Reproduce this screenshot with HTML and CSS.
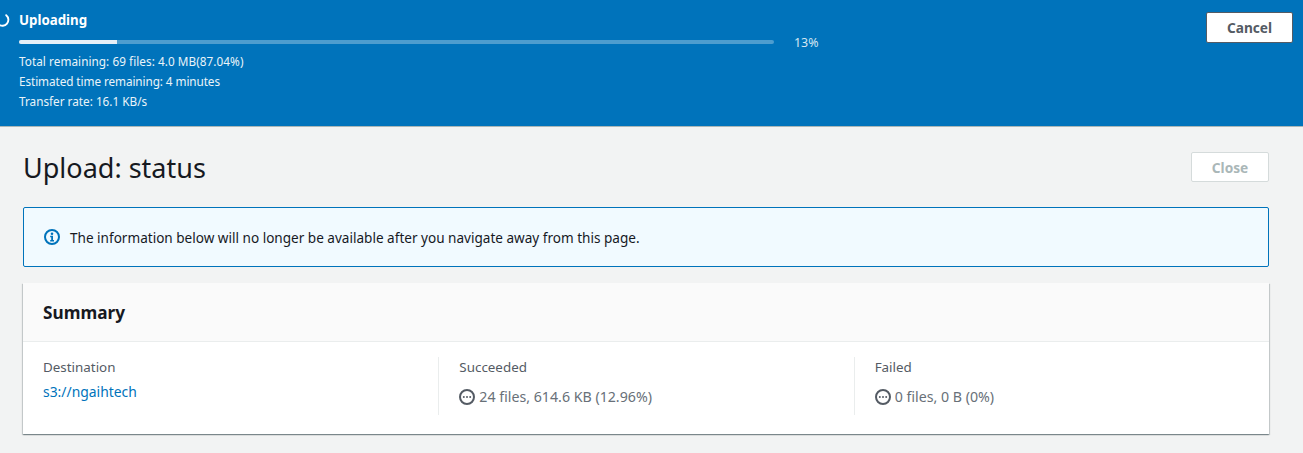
FILE: index.html
```html
<!DOCTYPE html>
<html lang="en">
<head>
<meta charset="utf-8">
<title>Upload: status</title>
<link rel="stylesheet" href="styles.css">
</head>
<body>
<header class="banner">
  <div class="banner-main">
    <div class="banner-title">
      <svg class="spinner" width="14" height="14" viewBox="0 0 14 14"><path d="M10.2 2.2A5.7 5.7 0 0 1 2.6 11.4" fill="none" stroke="#fff" stroke-width="1.9" stroke-linecap="round"/></svg>
      <span>Uploading</span>
    </div>
    <div class="progress-row">
      <div class="track"><div class="fill"></div></div>
      <span class="percent">13%</span>
    </div>
    <p class="detail detail-wide">Total remaining: 69 files: 4.0 MB(87.04%)</p>
    <p class="detail detail-narrow">Estimated time remaining: 4 minutes</p>
    <p class="detail">Transfer rate: 16.1 KB/s</p>
  </div>
  <button class="btn-cancel" type="button">Cancel</button>
</header>
<main class="content">
  <div class="page-head">
    <h1>Upload: status</h1>
    <button class="btn-close" type="button" disabled>Close</button>
  </div>
  <div class="alert">
    <svg width="16" height="16" viewBox="0 0 16 16"><circle cx="8" cy="8" r="7" fill="none" stroke="#0073bb" stroke-width="2"/><circle cx="8" cy="4.8" r="1.3" fill="#0073bb"/><path d="M6.2 6.8h2.8V11h1v1.4H6.2V11h1V8.2h-1z" fill="#0073bb"/></svg>
    <span>The information below will no longer be available after you navigate away from this page.</span>
  </div>
  <section class="card">
    <h2>Summary</h2>
    <div class="columns">
      <div class="col">
        <div class="label">Destination</div>
        <a class="link" href="#">s3://ngaihtech</a>
      </div>
      <div class="col col-div">
        <div class="label">Succeeded</div>
        <div class="status">
          <svg width="16" height="16" viewBox="0 0 16 16"><circle cx="8" cy="8" r="7" fill="none" stroke="#545b64" stroke-width="2"/><circle cx="4.8" cy="8" r="1" fill="#545b64"/><circle cx="8" cy="8" r="1" fill="#545b64"/><circle cx="11.2" cy="8" r="1" fill="#545b64"/></svg>
          <span>24 files, 614.6 KB (12.96%)</span>
        </div>
      </div>
      <div class="col col-div">
        <div class="label">Failed</div>
        <div class="status">
          <svg width="16" height="16" viewBox="0 0 16 16"><circle cx="8" cy="8" r="7" fill="none" stroke="#545b64" stroke-width="2"/><circle cx="4.8" cy="8" r="1" fill="#545b64"/><circle cx="8" cy="8" r="1" fill="#545b64"/><circle cx="11.2" cy="8" r="1" fill="#545b64"/></svg>
          <span>0 files, 0 B (0%)</span>
        </div>
      </div>
    </div>
  </section>
</main>
</body>
</html>
```
FILE: styles.css
```css
* { box-sizing: border-box; }
html, body { margin: 0; height: 100%; overflow: hidden; }
body {
  background: #f2f3f3;
  color: #16191f;
  font-family: "Noto Sans", "Open Sans", sans-serif;
  font-size: 14px;
}
.banner {
  height: 127px;
  background: #0073bb;
  border-bottom: 1px solid #aab7b8;
  color: #fff;
  display: flex;
  justify-content: space-between;
  align-items: flex-start;
  padding: 12px 10px 0 19px;
}
.banner-main { width: 810px; }
.banner-title {
  position: relative;
  font-size: 13.3px;
  font-weight: 700;
  line-height: 16px;
}
.spinner { position: absolute; left: -23px; top: 1px; }
.progress-row { display: flex; align-items: center; margin-top: 6px; height: 16px; }
.track { width: 755px; height: 4px; border-radius: 2px; background: #4d9dcf; overflow: hidden; flex: none; }
.fill { width: 13%; height: 100%; background: #e6eff7; }
.percent { margin-left: 20px; font-size: 12.4px; color: #d5e6f2; }
.detail { margin: 0; font-size: 11.75px; line-height: 20px; color: #eaf3f9; }
.detail-wide { letter-spacing: .05px; }
.detail-narrow { letter-spacing: -.08px; }
.progress-row + .detail { margin-top: 1px; }
.btn-cancel {
  width: 87px;
  height: 31px;
  background: #fff;
  border: 1px solid #545b64;
  border-radius: 2px;
  color: #545b64;
  font: 700 13.7px "Noto Sans", sans-serif;
}
.content { padding: 25px 34px 0 23px; }
.page-head { display: flex; justify-content: space-between; align-items: center; height: 30px; }
h1 { margin: 0; padding-top: 2px; font-size: 27px; font-weight: 400; line-height: 32px; }
.btn-close {
  width: 78px;
  height: 30px;
  background: #fff;
  border: 1px solid #d5dbdb;
  border-radius: 2px;
  color: #aab7b8;
  font: 700 13.7px "Noto Sans", sans-serif;
}
.alert {
  display: flex;
  align-items: center;
  gap: 10px;
  height: 60px;
  margin-top: 25px;
  padding-left: 20px;
  background: #f1faff;
  border: 1px solid #0073bb;
  border-radius: 2px;
  font-size: 13.57px;
}
.card {
  margin-top: 16px;
  height: 151px;
  background: #fff;
  box-shadow: 0 1px 1px 0 rgba(0,28,36,.3), 1px 1px 1px 0 rgba(0,28,36,.15), -1px 1px 1px 0 rgba(0,28,36,.15);
}
h2 {
  margin: 0;
  height: 59px;
  padding: 0 20px;
  display: flex;
  align-items: center;
  background: #fafafa;
  border-bottom: 1px solid #eaeded;
  font-size: 17.2px;
  font-weight: 700;
}
.columns { display: grid; grid-template-columns: repeat(3, 1fr); padding-top: 15px; }
.col { height: 58px; padding-left: 20px; }
.col-div { border-left: 1px solid #eaeded; }
.label { font-size: 13.4px; line-height: 20px; color: #545b64; }
.link { display: block; margin-top: 5px; font-size: 13.9px; line-height: 20px; color: #0073bb; text-decoration: none; }
.status { display: flex; align-items: center; gap: 4px; margin-top: 10px; font-size: 14.2px; line-height: 20px; color: #687078; }
```
